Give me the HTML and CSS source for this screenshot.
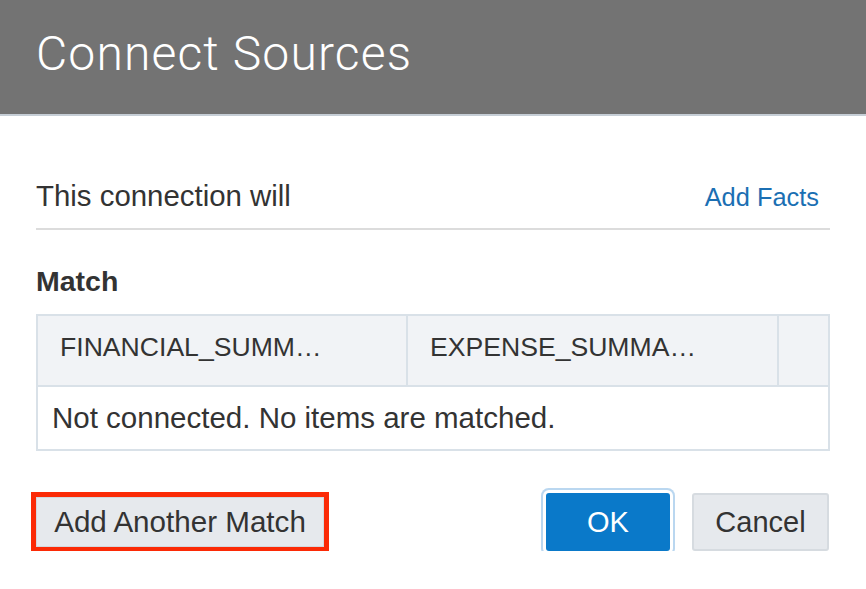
FILE: index.html
```html
<!DOCTYPE html>
<html>
<head>
<meta charset="utf-8">
<link rel="stylesheet" href="styles.css">
</head>
<body>
<div class="dialog">
  <div class="header">
    <h1 class="title">Connect Sources</h1>
  </div>
  <div class="content">
    <div class="intro">
      <span class="intro-text">This connection will</span>
      <a class="link">Add Facts</a>
    </div>
    <h2 class="section">Match</h2>
    <div class="table">
      <div class="thead">
        <div class="th">FINANCIAL_SUMM…</div>
        <div class="th">EXPENSE_SUMMA…</div>
        <div class="th th-last"></div>
      </div>
      <div class="tbody">
        <div class="td">Not connected. No items are matched.</div>
      </div>
    </div>
    <div class="actions">
      <button class="btn btn-add">Add Another Match</button>
      <div class="spacer"></div>
      <button class="btn btn-primary">OK</button>
      <button class="btn btn-cancel">Cancel</button>
    </div>
  </div>
</div>
</body>
</html>
```

FILE: styles.css
```css
html, body {
  margin: 0;
  padding: 0;
  background: #ffffff;
}
body {
  font-family: "Liberation Sans", Arial, sans-serif;
  color: #333333;
}
.header {
  background: #737373;
  border-bottom: 2px solid #c6ced6;
  padding: 30px 0 0 36px;
  box-sizing: content-box;
  height: 84px;
}
.title {
  margin: 0;
  font-family: Roboto, "Liberation Sans", sans-serif;
  font-weight: 300;
  font-size: 48px;
  line-height: 48px;
  color: #ffffff;
  letter-spacing: 1.15px;
}
.content {
  padding: 0 36px;
}
.intro {
  margin-top: 63px;
  display: flex;
  justify-content: space-between;
  align-items: baseline;
  padding-bottom: 14px;
  border-bottom: 2px solid #dcdcdc;
  padding-right: 11px;
}
.intro-text {
  font-size: 29.4px;
  line-height: 34px;
}
.link {
  font-size: 25.4px;
  line-height: 34px;
  color: #1b6fb3;
  cursor: pointer;
}
.section {
  margin: 34px 0 0 0;
  font-size: 28.5px;
  line-height: 34px;
  font-weight: bold;
  color: #333333;
}
.table {
  margin-top: 16px;
  border: 2px solid #d9e1e8;
}
.thead {
  display: grid;
  grid-template-columns: 370px 371px 1fr;
  background: #f1f3f6;
  border-bottom: 2px solid #d9e1e8;
}
.th {
  height: 69px;
  box-sizing: border-box;
  padding: 16px 0 0 22px;
  font-size: 26.6px;
  line-height: 30px;
  border-right: 2px solid #d9e1e8;
  white-space: nowrap;
  overflow: hidden;
}
.th-last {
  border-right: none;
}
.td {
  height: 62px;
  box-sizing: border-box;
  padding: 14px 0 0 14px;
  font-size: 29.5px;
  line-height: 34px;
}
.actions {
  margin-top: 42px;
  display: flex;
  align-items: center;
  height: 58px;
  padding-right: 1px;
}
.spacer {
  flex: 1;
}
.btn {
  font-family: "Liberation Sans", Arial, sans-serif;
  font-size: 29px;
  color: #333333;
  border-radius: 3px;
  box-sizing: border-box;
  margin: 0;
  padding: 0;
  cursor: pointer;
}
.btn-add {
  width: 288px;
  height: 50px;
  font-size: 29.6px;
  background: #e6e9ed;
  border: 1px solid #d3d8de;
  border-radius: 0;
  outline: 5px solid #fb2a06;
}
.btn-primary {
  width: 124px;
  height: 58px;
  background: #0a79c9;
  border: none;
  color: #ffffff;
  box-shadow: 0 0 0 3px #ffffff, 0 0 0 5px #bad7f0;
}
.btn-cancel {
  margin-left: 22px;
  width: 137px;
  height: 58px;
  background: #e6e9ed;
  border: 2px solid #d6dbe0;
}
```
